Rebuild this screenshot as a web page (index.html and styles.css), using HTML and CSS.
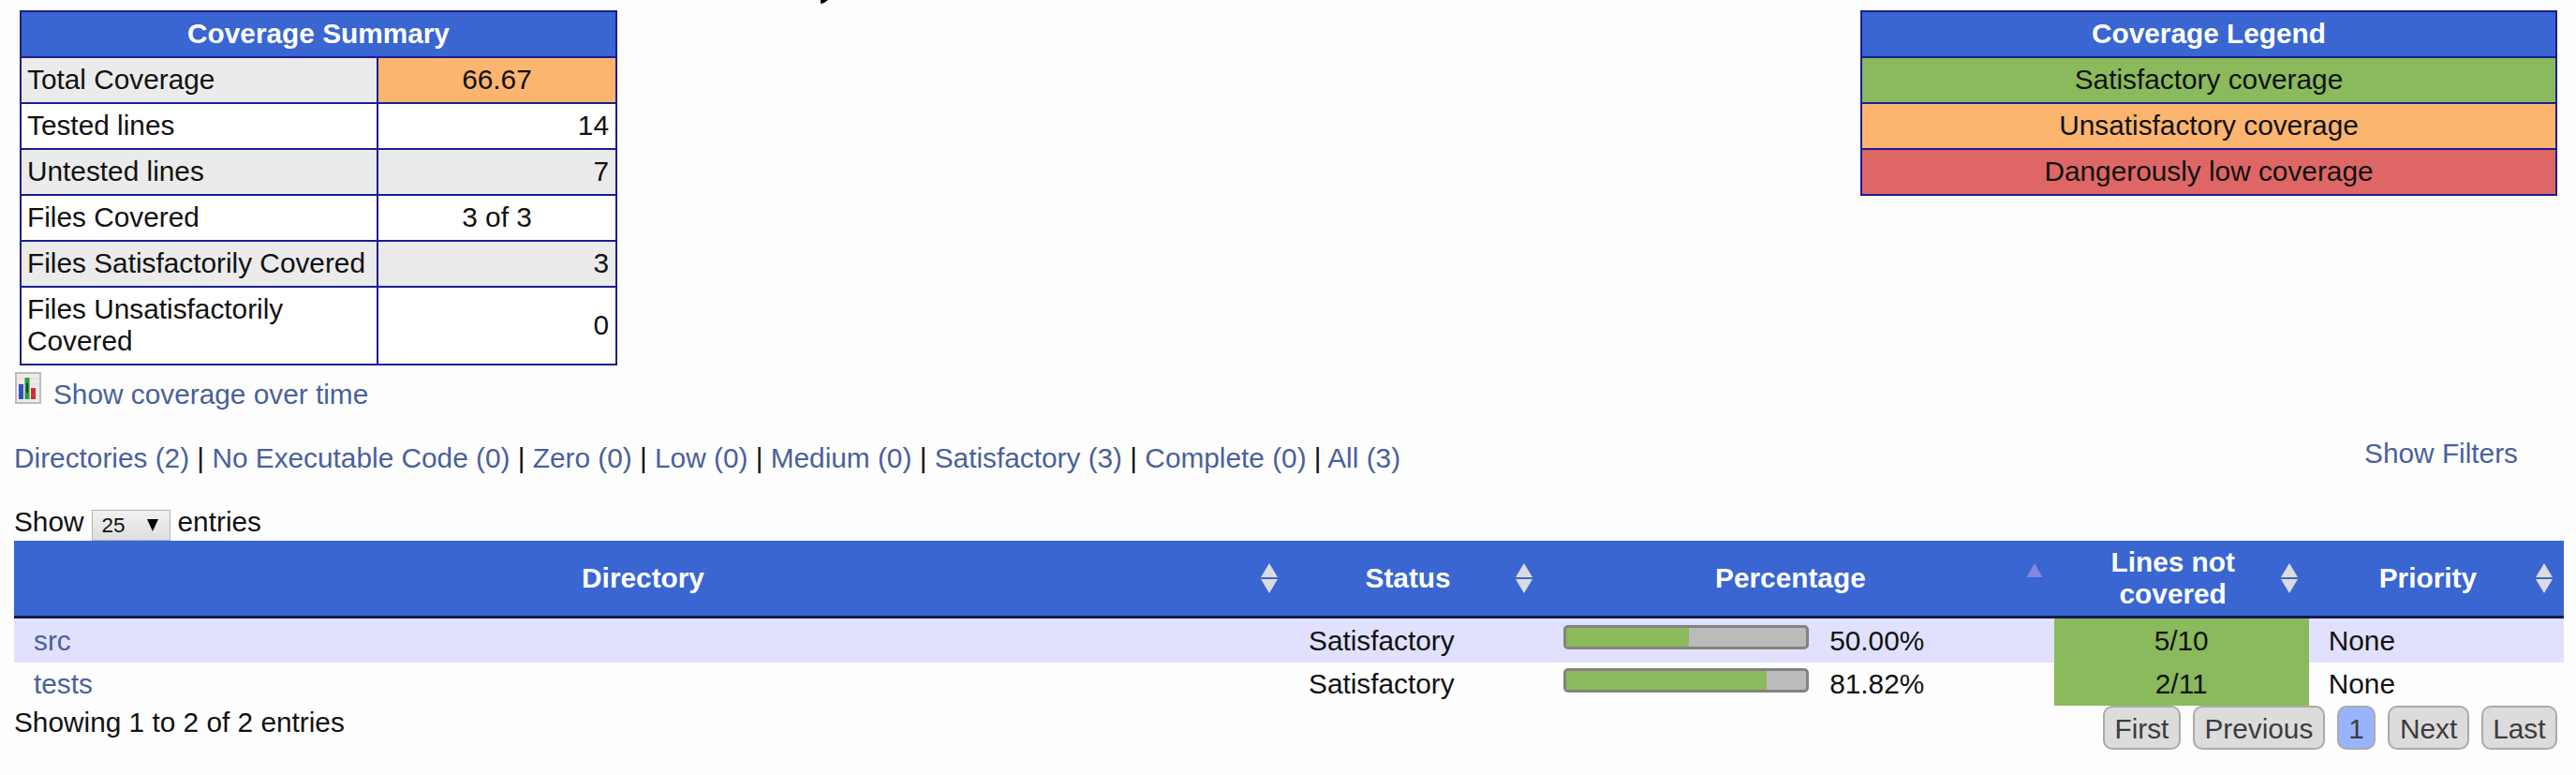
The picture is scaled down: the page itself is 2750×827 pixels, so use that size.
FILE: index.html
```html
<!DOCTYPE html>
<html lang="en">
<head>
<meta charset="utf-8">
<title>Code Coverage</title>
<link rel="stylesheet" href="styles.css">
</head>
<body>
<div class="top">
  <table class="summary">
    <colgroup><col class="label"><col></colgroup>
    <tr><th colspan="2">Coverage Summary</th></tr>
    <tr class="odd"><td>Total Coverage</td><td class="center warn">66.67</td></tr>
    <tr><td>Tested lines</td><td class="right">14</td></tr>
    <tr class="odd"><td>Untested lines</td><td class="right">7</td></tr>
    <tr><td>Files Covered</td><td class="center">3 of 3</td></tr>
    <tr class="odd"><td>Files Satisfactorily Covered</td><td class="right">3</td></tr>
    <tr class="tall"><td>Files Unsatisfactorily<br>Covered</td><td class="right">0</td></tr>
  </table>
  <table class="legend">
    <tr><th>Coverage Legend</th></tr>
    <tr><td class="ok">Satisfactory coverage</td></tr>
    <tr><td class="warn">Unsatisfactory coverage</td></tr>
    <tr><td class="bad">Dangerously low coverage</td></tr>
  </table>
  <svg class="title-tail" viewBox="0 0 8 4"><path d="M0 0H8Q5 3 0 4Z"/></svg>
</div>
<div class="graph">
  <svg class="chart" viewBox="0 0 28 34" preserveAspectRatio="none"><rect x="1" y="1" width="26" height="32" fill="#ececec" stroke="#bdbdbd" stroke-width="2"/><path d="M3 7H25M3 13H25M3 19H25M3 25H25" stroke="#d6d6d6"/><rect x="4" y="13" width="5" height="16" fill="#3a4bc0"/><rect x="10.500" y="6" width="5" height="23" fill="#2c9a35"/><rect x="12" y="12" width="2" height="10" fill="#15401c"/><rect x="17" y="17" width="5" height="12" fill="#cf3038"/></svg>
  <a>Show coverage over time</a>
</div>
<div class="filters">
  <div><a>Directories (2)</a> | <a>No Executable Code (0)</a> | <a>Zero (0)</a> | <a>Low (0)</a> | <a>Medium (0)</a> | <a>Satisfactory (3)</a> | <a>Complete (0)</a> | <a>All (3)</a></div>
  <a class="show-filters">Show Filters</a>
</div>
<div class="length">Show <span class="select"><span>25</span><svg class="caret" viewBox="0 0 12 13"><path d="M0 0H12L6 13Z"/></svg></span> entries</div>
<table class="data">
  <colgroup><col class="c50"><col class="c10"><col class="c20"><col class="c10"><col class="c10"></colgroup>
  <thead><tr>
    <th><div class="head"><span>Directory</span><svg class="sort" viewBox="0 0 18 32"><path d="M9 0L18 15H0ZM0 17H18L9 32Z"/></svg></div></th>
    <th><div class="head"><span>Status</span><svg class="sort" viewBox="0 0 18 32"><path d="M9 0L18 15H0ZM0 17H18L9 32Z"/></svg></div></th>
    <th><div class="head"><span>Percentage</span><svg class="sort asc" viewBox="0 0 18 32"><path d="M9 0L17.500 15H.5Z"/></svg></div></th>
    <th><div class="head"><span>Lines not covered</span><svg class="sort" viewBox="0 0 18 32"><path d="M9 0L18 15H0ZM0 17H18L9 32Z"/></svg></div></th>
    <th><div class="head"><span>Priority</span><svg class="sort" viewBox="0 0 18 32"><path d="M9 0L18 15H0ZM0 17H18L9 32Z"/></svg></div></th>
  </tr></thead>
  <tbody>
    <tr class="shade"><td><a>src</a></td><td>Satisfactory</td><td><div class="pct"><div class="bar"><div class="fill" style="width:51%"></div></div>50.00%</div></td><td class="center ok">5/10</td><td>None</td></tr>
    <tr><td><a>tests</a></td><td>Satisfactory</td><td><div class="pct"><div class="bar"><div class="fill" style="width:83.7%"></div></div>81.82%</div></td><td class="center ok">2/11</td><td>None</td></tr>
  </tbody>
</table>
<div class="footer">
  <div class="info">Showing 1 to 2 of 2 entries</div>
  <div class="pages"><span class="page">First</span><span class="page">Previous</span><span class="page current">1</span><span class="page">Next</span><span class="page">Last</span></div>
</div>
</body>
</html>
```

FILE: styles.css
```css
* { box-sizing: border-box; }
body {
  margin: 0;
  padding: 11px 13px 0 14px;
  height: 827px;
  overflow: hidden;
  background: #fefefe;
  color: #111;
  font: 29.8px/34px "Liberation Sans", Arial, sans-serif;
}
a { color: #4a609c; }
table { border-spacing: 0; table-layout: fixed; }
th { color: #fff; background: #3966d0; font-weight: bold; }
.top { position: relative; display: flex; justify-content: space-between; align-items: flex-start; padding: 0 7px 0 7px; }
.title-tail { position: absolute; left: 862px; top: -11px; width: 8px; height: 4px; }
.summary, .legend { border-collapse: collapse; background: #fff; }
.summary { width: 638px; }
.label { width: 381px; }
.legend { width: 744px; }
.summary th, .summary td, .legend th, .legend td { border: 2px solid #1c1c94; height: 49px; padding: 0 7px 2px; }
.summary td:first-child { padding-left: 6px; }
.summary .tall td { height: 83px; }
.legend td { text-align: center; }
.odd td { background: #ebebeb; }
.center, .summary .center { text-align: center; }
.right { text-align: right; }
.ok { background: #8aba5b; }
.summary .warn, .warn { background: #fcb56e; }
.bad { background: #de6766; }
.graph { display: flex; height: 62px; padding: 7px 0 0 2px; }
.graph a { margin: 7px 0 0 13px; }
.chart { width: 28px; height: 34px; }
.filters { display: flex; justify-content: space-between; height: 86px; padding: 20px 49px 0 1px; }
.show-filters { margin-top: -5px; }
.length { display: flex; height: 39px; gap: 8px; padding: 2px 0 0 1px; }
.select { display: flex; align-items: center; justify-content: space-between; width: 84px; height: 33px; margin-top: 4px; padding: 0 12px 0 10px; border: 1px solid #b3b3b3; background: linear-gradient(#f2f2f2, #dedede); font-size: 22.500px; }
.caret { width: 12px; height: 13px; }
.data { width: 2722px; margin-left: 1px; }
.c50 { width: 50%; }
.c20 { width: 20%; }
.c10 { width: 10%; }
.data th { height: 83px; padding: 0; border-bottom: 3px solid #141a4e; }
.head { display: flex; align-items: center; padding: 0 12px 0 12px; }
.head span { flex: 1; padding: 0 7px 0 7px; }
.sort { width: 18px; height: 32px; fill: #dadce0; }
.asc { fill: #8286df; }
.data td { height: 46.500px; padding: 1px 21px 0; }
.shade { background: #e1e1fd; }
.shade .ok { background: #8aba5b; }
.pct { display: flex; align-items: center; gap: 22px; }
.bar { width: 262px; height: 26px; margin-bottom: 8px; border: 3px solid #828282; border-radius: 5px; background: #bbb; }
.fill { height: 100%; background: #8aba5b; }
.footer { display: flex; justify-content: space-between; }
.info { padding: 1px 0 0 1px; }
.pages { display: flex; gap: 13px; padding-right: 7px; }
.page { height: 47px; padding: 6px 10.500px 0; border: 2px solid #aaa; border-radius: 10px; background: #dcdcdc; color: #3c3c3c; }
.current { background: #99b3ff; }
```
